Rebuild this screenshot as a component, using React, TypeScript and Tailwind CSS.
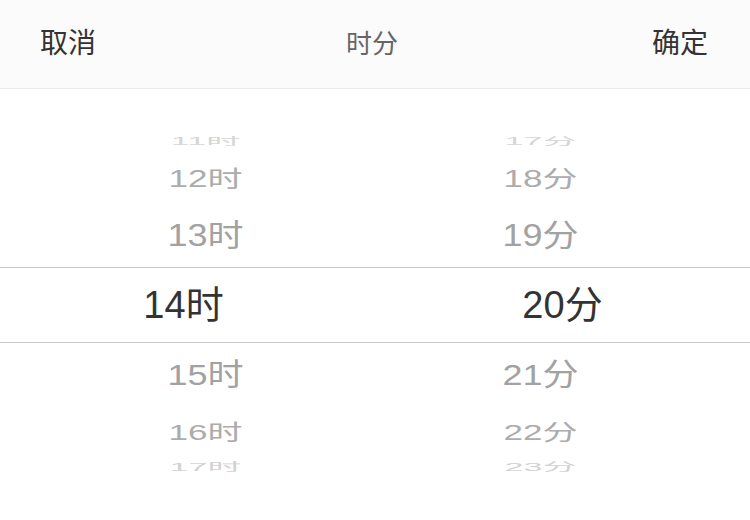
import React from "react";

const font = { fontFamily: '"Liberation Sans", "Noto Sans CJK SC", sans-serif' };

type Item = { h: string; m: string; rowCls: string; txtCls: string };

const top: Item[] = [
  { h: "11时", m: "17分", rowCls: "h-[36px]", txtCls: "text-[34px] scale-y-[0.3] text-[#d6d6d6]" },
  { h: "12时", m: "18分", rowCls: "h-[38px]", txtCls: "text-[35px] scale-y-[0.66] text-[#acacac]" },
  { h: "13时", m: "19分", rowCls: "h-[62px] mt-[8px]", txtCls: "text-[36px] scale-y-[0.86] text-[#a2a2a2]" },
];
const bottom: Item[] = [
  { h: "15时", m: "21分", rowCls: "h-[64px]", txtCls: "text-[36px] scale-y-[0.84] text-[#a2a2a2]" },
  { h: "16时", m: "22分", rowCls: "h-[50px]", txtCls: "text-[35px] scale-y-[0.62] text-[#acacac]" },
  { h: "17时", m: "23分", rowCls: "h-[20px]", txtCls: "text-[34px] scale-y-[0.32] text-[#d2d2d2]" },
];

function Row({ it }: { it: Item }) {
  return (
    <div className={"flex " + it.rowCls}>
      <div className="flex-1 flex items-center justify-center">
        <span className={"leading-none whitespace-nowrap translate-x-[18px] " + it.txtCls}>{it.h}</span>
      </div>
      <div className="flex-1 flex items-center justify-center">
        <span className={"leading-none whitespace-nowrap -translate-x-[22px] " + it.txtCls}>{it.m}</span>
      </div>
    </div>
  );
}

export default function App() {
  return (
    <div className="w-[750px] h-[520px] bg-white overflow-hidden" style={font}>
      <div className="h-[89px] bg-[#fbfbfb] border-b border-[#ececec] flex items-center justify-between pl-[40px] pr-[42px]">
        <span className="text-[28px] leading-none text-[#333]">取消</span>
        <span className="text-[26px] leading-none text-[#666] -translate-x-[2px]">时分</span>
        <span className="text-[28px] leading-none text-[#333]">确定</span>
      </div>
      <div className="pt-[34px]">
        {top.map((it) => (
          <Row key={it.h} it={it} />
        ))}
        <div className="h-[76px] border-y border-[#c8c8c8] flex">
          <div className="flex-1 flex items-center justify-center">
            <span className="text-[38px] leading-none text-[#333] -translate-x-[4px]">14时</span>
          </div>
          <div className="flex-1 flex items-center justify-center">
            <span className="text-[38px] leading-none text-[#333]">20分</span>
          </div>
        </div>
        {bottom.map((it) => (
          <Row key={it.h} it={it} />
        ))}
      </div>
    </div>
  );
}
